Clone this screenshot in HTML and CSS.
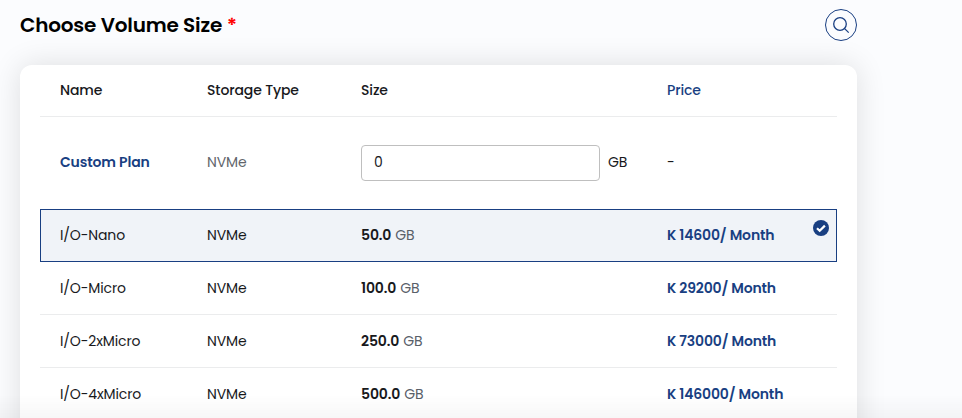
FILE: index.html
```html
<!DOCTYPE html>
<html lang="en">
<head>
<meta charset="utf-8">
<title>Choose Volume Size</title>
<link rel="stylesheet" href="styles.css">
</head>
<body>
<main class="page">
  <header class="heading">
    <h1 class="title">Choose Volume Size <span class="required">*</span></h1>
    <button class="search" aria-label="Search">
      <svg width="18" height="18" viewBox="0 0 18 18" fill="none" stroke="currentColor" stroke-width="1.3"><circle cx="8" cy="8" r="6.3"/><path d="M12.4 12.4l4.3 4.2"/></svg>
    </button>
  </header>
  <section class="card">
    <div class="row head">
      <span>Name</span><span>Storage Type</span><span>Size</span><span class="price-head">Price</span>
    </div>
    <div class="row custom">
      <span class="custom-name">Custom Plan</span><span class="muted">NVMe</span>
      <div class="field"><input class="input" type="text" value="0" aria-label="Size"><span>GB</span></div>
      <span>-</span>
    </div>
    <div class="row plan selected">
      <span>I/O-Nano</span><span>NVMe</span><span class="size"><b>50.0</b><span class="unit">GB</span></span><span class="price">K 14600/ Month</span>
      <svg class="check" width="16" height="16" viewBox="0 0 16 16"><circle cx="8" cy="8" r="8" fill="#193f82"/><path d="M4 8.2l2.7 2.6 5.2-5.2" fill="none" stroke="#fff" stroke-width="2.2"/></svg>
    </div>
    <div class="row plan">
      <span>I/O-Micro</span><span>NVMe</span><span class="size"><b>100.0</b><span class="unit">GB</span></span><span class="price">K 29200/ Month</span>
    </div>
    <div class="row plan">
      <span>I/O-2xMicro</span><span>NVMe</span><span class="size"><b>250.0</b><span class="unit">GB</span></span><span class="price">K 73000/ Month</span>
    </div>
    <div class="row plan">
      <span>I/O-4xMicro</span><span>NVMe</span><span class="size"><b>500.0</b><span class="unit">GB</span></span><span class="price">K 146000/ Month</span>
    </div>
  </section>
</main>
<div class="fade"></div>
</body>
</html>
```
FILE: styles.css
```css
* { box-sizing: border-box; }
body {
  margin: 0;
  height: 418px;
  overflow: hidden;
  background: #fbfcfe;
  color: #18191c;
  font: 14px/20px Poppins, Inter, sans-serif;
}
.page { width: 857px; height: 418px; padding: 9px 0 0 20px; }
.heading { display: flex; justify-content: space-between; height: 56px; }
.title { margin: 0; font-size: 20px; line-height: 32px; font-weight: 600; color: #000; letter-spacing: -0.2px; white-space: nowrap; }
.required { color: #f00; }
.search {
  display: grid; place-items: center;
  width: 32px; height: 32px; padding: 0;
  border: 1px solid #193f82; border-radius: 50%;
  background: transparent; color: #193f82;
}
.card {
  height: 409px; padding: 0 20px;
  border-radius: 12px; background: #fff;
  box-shadow: 0 0 30px rgba(0, 0, 0, .12);
  letter-spacing: -0.13px;
}
.row {
  position: relative;
  display: grid; grid-template-columns: 147px 154px 306px 1fr;
  align-items: center; padding: 0 20px;
  border-bottom: 1px solid #ebeced;
  white-space: nowrap;
}
.row > span { justify-self: start; }
.head { height: 52px; padding-bottom: 1px; font-weight: 500; }
.price-head { color: #193f82; }
.custom { height: 92px; border-bottom: 0; }
.custom > span { padding-bottom: 2px; }
.custom-name { font-weight: 600; color: #193f82; }
.muted { color: #62656b; }
.field { display: flex; align-items: center; gap: 8px; }
.field span { padding-bottom: 2px; }
.input {
  width: 239px; height: 36px; padding: 0 12px 2px;
  border: 1px solid #bfbfbf; border-radius: 4px;
  background: #fff; color: inherit; font: inherit;
}
.plan { height: 53px; }
.selected { border: 1px solid #193f82; padding: 0 19px 1px; background: #f0f3f8; }
.size { display: flex; gap: 4px; }
.size b { font-weight: 600; }
.unit { color: #596069; }
.price { font-weight: 600; color: #193f82; letter-spacing: -0.16px; }
.check { position: absolute; top: 10px; right: 7px; }
.fade {
  position: fixed; left: 0; right: 0; bottom: 0; height: 24px;
  background: linear-gradient(rgba(0, 0, 0, 0), rgba(0, 0, 0, .03));
}
```
